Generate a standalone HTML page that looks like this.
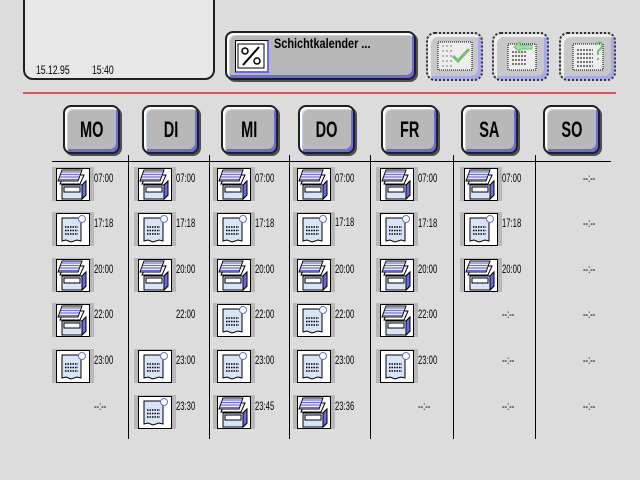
<!DOCTYPE html>
<html><head><meta charset="utf-8"><style>
*{margin:0;padding:0;box-sizing:border-box}
body{width:640px;height:480px;background:#dcdcdc;position:relative;overflow:hidden;font-family:"Liberation Sans",sans-serif}
.a{position:absolute}
.panel{left:23px;top:-10px;width:192px;height:90px;background:#e8e8e8;border:2px solid #202020;border-radius:0 0 10px 10px}
.small{font-size:12px;color:#000;transform:scaleX(.72);transform-origin:left top;white-space:nowrap}
.btn{background:#b8b8b8;border:2px solid #202020;border-radius:8px;box-shadow:inset 2px 2px 0 #fff,inset 3px 3px 0 #c8d0f0,inset -2px -3px 0 #6a6ae8,2px 2px 0 #505050}
.day{width:57px;height:49px;top:105px;font-weight:bold;font-size:22px;text-align:center;line-height:46px}
.day span{display:inline-block;transform:scaleX(.66)}
.grey{background:#c8c8c8;border:2px dotted #303030;border-radius:9px;box-shadow:inset 3px 3px 0 #eee,inset -3px -3px 0 #a8a8f0}
.ic{width:42px;height:34px;background:#b8b8b8}
.ic svg{position:absolute;left:4px;top:1px}
.t{font-size:12px;transform:scaleX(.64);transform-origin:left top;white-space:nowrap}
.vl{width:1px;background:#000;top:155px;height:284px}
</style></head><body>
<svg width="0" height="0" style="position:absolute">
<defs>
<symbol id="st" viewBox="0 0 34 33">
<rect x="0.5" y="0.5" width="33" height="32" fill="#fff" stroke="#000"/>
<path d="M6 17 H26 L30 13 V27 L26 31 H6 Z" fill="#d8e4fa" stroke="#000"/>
<path d="M26 17 L30 13 V27 L26 31Z" fill="#6a6ae8" stroke="#000"/>
<path d="M8 19 H24 V24 H8Z" fill="#fff" stroke="#000"/>
<path d="M4 16 L8 7 H28 L24 16Z" fill="#fff" stroke="#000"/>
<path d="M2 13 L6 2 H26 L22 13Z" fill="#fff" stroke="#000"/>
<path d="M6 4 H25 M5 6.5 H24 M4 9 H23 M3 11.5 H22" stroke="#6a6ae8" stroke-width="1.3"/>
</symbol>
<symbol id="sc" viewBox="0 0 34 33">
<rect x="0.5" y="0.5" width="33" height="32" fill="#fff" stroke="#000"/>
<path d="M6 5 H25 V28 L21 27 L15 29 L10 27 L6 28 Z" fill="#d8e4fa" stroke="#000"/>
<circle cx="26" cy="6" r="3.5" fill="#fff" stroke="#6a6ae8"/>
<path d="M9 14 H22 M9 17.5 H22 M9 21 H22" stroke="#000" stroke-width="1.5" stroke-dasharray="1.5 1"/>
</symbol>
</defs></svg>

<div class="a panel"></div>
<div class="a small" style="left:36px;top:63px">15.12.95</div>
<div class="a small" style="left:92px;top:63px">15:40</div>

<div class="a btn" style="left:225px;top:31px;width:191px;height:49px"></div>
<div class="a" style="left:235px;top:40px;width:34px;height:33px;background:#fff;border:1px solid #000;border-right:2px solid #6a6ae8;border-bottom:2px solid #6a6ae8">
<svg width="32" height="30"><rect x="2" y="3" width="26" height="24" fill="#fff" stroke="#000"/><circle cx="9" cy="10" r="3" fill="none" stroke="#000" stroke-width="1.5"/><circle cx="21" cy="20" r="3" fill="none" stroke="#000" stroke-width="1.5"/><path d="M7 24 L23 6" stroke="#000" stroke-width="2"/></svg></div>
<div class="a" style="left:274px;top:35px;font-weight:bold;font-size:14px;transform:scaleX(.78);transform-origin:left top;white-space:nowrap">Schichtkalender ...</div>

<div class="a grey" style="left:426px;top:32px;width:57px;height:49px"></div>
<div class="a grey" style="left:492px;top:32px;width:57px;height:49px"></div>
<div class="a grey" style="left:559px;top:32px;width:57px;height:49px"></div>
<svg class="a" style="left:436px;top:40px" width="40" height="32"><rect x="2" y="2" width="34" height="28" fill="#eee" stroke="#000" stroke-dasharray="1 1"/><path d="M6 6h12M6 11h12M6 16h12M6 21h12M6 26h12" stroke="#777" stroke-dasharray="2 2"/><path d="M17 16 L22 21 L33 9" stroke="#70c070" stroke-width="3" fill="none"/></svg>
<svg class="a" style="left:502px;top:40px" width="40" height="32"><rect x="6" y="4" width="28" height="26" fill="#eee" stroke="#000" stroke-dasharray="1 1"/><path d="M10 12h14M10 16h14M10 20h14M10 24h14" stroke="#777" stroke-width="2" stroke-dasharray="2 1"/><path d="M12 7 L18 2 V5 H30 V9 H18 V12Z" fill="#a0e0a0" stroke="#70c070"/></svg>
<svg class="a" style="left:569px;top:40px" width="40" height="32"><rect x="4" y="4" width="30" height="26" fill="#eee" stroke="#000" stroke-dasharray="1 1"/><path d="M8 10h16M8 14h16M8 18h16M8 22h16M8 26h16" stroke="#777" stroke-width="2" stroke-dasharray="2 1"/><path d="M27 4 Q32 0 33 5 Q33 8 29 11 V15" stroke="#70c070" stroke-width="2" fill="none"/><rect x="28" y="18" width="2" height="2" fill="#70c070"/></svg>

<div class="a" style="left:23px;top:92px;width:593px;height:2px;background:#e05050"></div>

<div class="a btn day" style="left:63px"><span>MO</span></div>
<div class="a btn day" style="left:142px"><span>DI</span></div>
<div class="a btn day" style="left:221px"><span>MI</span></div>
<div class="a btn day" style="left:298px"><span>DO</span></div>
<div class="a btn day" style="left:381px"><span>FR</span></div>
<div class="a btn day" style="left:461px"><span>SA</span></div>
<div class="a btn day" style="left:543px"><span>SO</span></div>

<div class="a" style="left:52px;top:161px;width:559px;height:1px;background:#000"></div>
<div class="a vl" style="left:128px"></div>
<div class="a vl" style="left:209px"></div>
<div class="a vl" style="left:289px"></div>
<div class="a vl" style="left:370px"></div>
<div class="a vl" style="left:453px"></div>
<div class="a vl" style="left:535px"></div>

<!-- MO -->
<div class="a ic" style="left:52px;top:167px"><svg width="34" height="33"><use href="#st"/></svg></div><div class="a t" style="left:94px;top:171px">07:00</div>
<div class="a ic" style="left:52px;top:212px"><svg width="34" height="33"><use href="#sc"/></svg></div><div class="a t" style="left:94px;top:216px">17:18</div>
<div class="a ic" style="left:52px;top:258px"><svg width="34" height="33"><use href="#st"/></svg></div><div class="a t" style="left:94px;top:262px">20:00</div>
<div class="a ic" style="left:52px;top:303px"><svg width="34" height="33"><use href="#st"/></svg></div><div class="a t" style="left:94px;top:307px">22:00</div>
<div class="a ic" style="left:52px;top:349px"><svg width="34" height="33"><use href="#sc"/></svg></div><div class="a t" style="left:94px;top:353px">23:00</div>
<div class="a t" style="left:94px;top:399px">--:--</div>
<!-- DI -->
<div class="a ic" style="left:134px;top:167px"><svg width="34" height="33"><use href="#st"/></svg></div><div class="a t" style="left:176px;top:171px">07:00</div>
<div class="a ic" style="left:134px;top:212px"><svg width="34" height="33"><use href="#sc"/></svg></div><div class="a t" style="left:176px;top:216px">17:18</div>
<div class="a ic" style="left:134px;top:258px"><svg width="34" height="33"><use href="#st"/></svg></div><div class="a t" style="left:176px;top:262px">20:00</div>
<div class="a t" style="left:176px;top:307px">22:00</div>
<div class="a ic" style="left:134px;top:349px"><svg width="34" height="33"><use href="#sc"/></svg></div><div class="a t" style="left:176px;top:353px">23:00</div>
<div class="a ic" style="left:134px;top:395px"><svg width="34" height="33"><use href="#sc"/></svg></div><div class="a t" style="left:176px;top:399px">23:30</div>
<!-- MI -->
<div class="a ic" style="left:213px;top:167px"><svg width="34" height="33"><use href="#st"/></svg></div><div class="a t" style="left:255px;top:171px">07:00</div>
<div class="a ic" style="left:213px;top:212px"><svg width="34" height="33"><use href="#sc"/></svg></div><div class="a t" style="left:255px;top:216px">17:18</div>
<div class="a ic" style="left:213px;top:258px"><svg width="34" height="33"><use href="#st"/></svg></div><div class="a t" style="left:255px;top:262px">20:00</div>
<div class="a ic" style="left:213px;top:303px"><svg width="34" height="33"><use href="#sc"/></svg></div><div class="a t" style="left:255px;top:307px">22:00</div>
<div class="a ic" style="left:213px;top:349px"><svg width="34" height="33"><use href="#sc"/></svg></div><div class="a t" style="left:255px;top:353px">23:00</div>
<div class="a ic" style="left:213px;top:395px"><svg width="34" height="33"><use href="#st"/></svg></div><div class="a t" style="left:255px;top:399px">23:45</div>
<!-- DO -->
<div class="a ic" style="left:293px;top:167px"><svg width="34" height="33"><use href="#st"/></svg></div><div class="a t" style="left:335px;top:171px">07:00</div>
<div class="a ic" style="left:293px;top:212px"><svg width="34" height="33"><use href="#sc"/></svg></div><div class="a t" style="left:335px;top:215px">17:18</div>
<div class="a ic" style="left:293px;top:258px"><svg width="34" height="33"><use href="#st"/></svg></div><div class="a t" style="left:335px;top:262px">20:00</div>
<div class="a ic" style="left:293px;top:303px"><svg width="34" height="33"><use href="#sc"/></svg></div><div class="a t" style="left:335px;top:307px">22:00</div>
<div class="a ic" style="left:293px;top:349px"><svg width="34" height="33"><use href="#sc"/></svg></div><div class="a t" style="left:335px;top:353px">23:00</div>
<div class="a ic" style="left:293px;top:395px"><svg width="34" height="33"><use href="#st"/></svg></div><div class="a t" style="left:335px;top:399px">23:36</div>
<!-- FR -->
<div class="a ic" style="left:376px;top:167px"><svg width="34" height="33"><use href="#st"/></svg></div><div class="a t" style="left:418px;top:171px">07:00</div>
<div class="a ic" style="left:376px;top:212px"><svg width="34" height="33"><use href="#sc"/></svg></div><div class="a t" style="left:418px;top:216px">17:18</div>
<div class="a ic" style="left:376px;top:258px"><svg width="34" height="33"><use href="#st"/></svg></div><div class="a t" style="left:418px;top:262px">20:00</div>
<div class="a ic" style="left:376px;top:303px"><svg width="34" height="33"><use href="#st"/></svg></div><div class="a t" style="left:418px;top:307px">22:00</div>
<div class="a ic" style="left:376px;top:349px"><svg width="34" height="33"><use href="#sc"/></svg></div><div class="a t" style="left:418px;top:353px">23:00</div>
<div class="a t" style="left:418px;top:399px">--:--</div>
<!-- SA -->
<div class="a ic" style="left:460px;top:167px"><svg width="34" height="33"><use href="#st"/></svg></div><div class="a t" style="left:502px;top:171px">07:00</div>
<div class="a ic" style="left:460px;top:212px"><svg width="34" height="33"><use href="#sc"/></svg></div><div class="a t" style="left:502px;top:216px">17:18</div>
<div class="a ic" style="left:460px;top:258px"><svg width="34" height="33"><use href="#st"/></svg></div><div class="a t" style="left:502px;top:262px">20:00</div>
<div class="a t" style="left:502px;top:307px">--:--</div>
<div class="a t" style="left:502px;top:353px">--:--</div>
<div class="a t" style="left:502px;top:399px">--:--</div>
<!-- SO -->
<div class="a t" style="left:583px;top:171px">--:--</div>
<div class="a t" style="left:583px;top:216px">--:--</div>
<div class="a t" style="left:583px;top:262px">--:--</div>
<div class="a t" style="left:583px;top:307px">--:--</div>
<div class="a t" style="left:583px;top:353px">--:--</div>
<div class="a t" style="left:583px;top:399px">--:--</div>
</body></html>
